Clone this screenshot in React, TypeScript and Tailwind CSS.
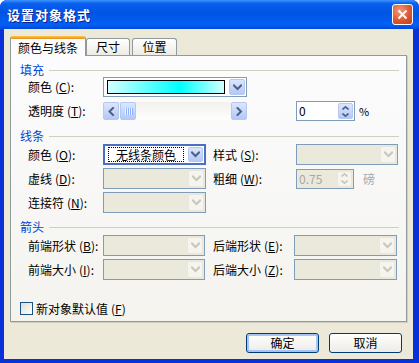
import type { ReactNode } from "react";

const font = { fontFamily: '"Noto Sans CJK SC", "Liberation Sans", sans-serif' };

function Chevron({ dir, color }: { dir: "down" | "left" | "right"; color: string }) {
  const d = dir === "down" ? "M1 1.5 L4.5 5 L8 1.5" : dir === "left" ? "M5 1 L1.5 4.5 L5 8" : "M1.5 1 L5 4.5 L1.5 8";
  const size = dir === "down" ? { w: 9, h: 7 } : { w: 7, h: 9 };
  return (
    <svg width={size.w} height={size.h} viewBox={`0 0 ${size.w} ${size.h}`}>
      <path d={d} fill="none" stroke={color} strokeWidth={2} strokeLinecap="square" />
    </svg>
  );
}

function XpButton({ disabled, children, className = "" }: { disabled?: boolean; children: ReactNode; className?: string }) {
  return (
    <div
      className={`flex items-center justify-center rounded-[2px] border ${
        disabled
          ? "border-[#e8e6dd] bg-[#f5f4ef]"
          : "border-[#b5c8f2] bg-gradient-to-b from-[#dbe6fe] to-[#b4c8f6]"
      } ${className}`}
    >
      {children}
    </div>
  );
}

function Combo({ w, disabled, focused, children }: { w: number; disabled?: boolean; focused?: boolean; children?: ReactNode }) {
  return (
    <div
      style={{ width: w }}
      className={`flex h-[21px] items-stretch ${
        focused ? "border-2 border-[#4a6fc4]" : "border border-[#7f9db9]"
      } ${disabled ? "bg-[#ebe9db]" : "bg-white"}`}
    >
      <div className="flex min-w-0 flex-1 items-center">{children}</div>
      <XpButton disabled={disabled} className={`m-px ${focused ? "w-[15px]" : "w-[16px]"}`}>
        <Chevron dir="down" color={disabled ? "#c9c7ba" : "#4d6185"} />
      </XpButton>
    </div>
  );
}

function Spin({ w, value, disabled }: { w: number; value: string; disabled?: boolean }) {
  return (
    <div style={{ width: w }} className={`flex h-[20px] items-stretch border border-[#7f9db9] ${disabled ? "bg-[#ebe9db]" : "bg-white"}`}>
      <div className={`flex flex-1 items-center pl-[2px] text-[12px] ${disabled ? "text-[#a7a6aa]" : "text-black"}`}>{value}</div>
      <XpButton disabled={disabled} className="m-px w-[15px] flex-col gap-[3px]">
        <svg width="7" height="4" viewBox="0 0 7 4">
          <path d="M0.5 3.5 L3.5 0.8 L6.5 3.5" fill="none" stroke={disabled ? "#c9c7ba" : "#4d6185"} strokeWidth={1.6} />
        </svg>
        <svg width="7" height="4" viewBox="0 0 7 4">
          <path d="M0.5 0.5 L3.5 3.2 L6.5 0.5" fill="none" stroke={disabled ? "#c9c7ba" : "#4d6185"} strokeWidth={1.6} />
        </svg>
      </XpButton>
    </div>
  );
}

function Label({ w, text, k }: { w: number; text: string; k: string }) {
  return (
    <div style={{ width: w }} className="shrink-0 text-[12px] leading-none text-black">
      {text}
      <span className="ml-[3px]">(</span>
      <span className="underline">{k}</span>):
    </div>
  );
}

function Section({ title }: { title: string }) {
  return (
    <div className="flex h-[14px] items-center pl-[9px] pr-[7px]">
      <span className="text-[12px] leading-none text-[#0046d5]">{title}</span>
      <div className="ml-[5px] h-px flex-1 bg-[#d0d0bf]" />
    </div>
  );
}

function Tab({ label, active, w }: { label: string; active?: boolean; w: number }) {
  if (active)
    return (
      <div
        style={{ width: w }}
        className="relative z-10 -mb-px flex h-[20px] flex-col overflow-hidden rounded-t-[3px] border-x border-[#919b9c] bg-[#fcfcfe]"
      >
        <div className="h-[3px] bg-gradient-to-b from-[#ffc83c] to-[#e68b2c]" />
        <div className="flex flex-1 items-center justify-center text-[12px] leading-none">{label}</div>
      </div>
    );
  return (
    <div
      style={{ width: w }}
      className="mt-[2px] flex h-[17px] items-center justify-center rounded-t-[3px] border-x border-t border-[#919b9c] bg-gradient-to-b from-white to-[#ecebe6] text-[12px] leading-none"
    >
      {label}
    </div>
  );
}

export default function App() {
  return (
    <div style={font} className="h-[363px] w-[419px] overflow-hidden bg-white">
      <div className="flex h-full flex-col rounded-t-[7px] bg-[#0831d9]">
        <div className="flex h-[29px] shrink-0 items-center rounded-t-[7px] bg-[linear-gradient(to_bottom,#3d95ff_0%,#0a5fef_12%,#0054e3_45%,#0060f5_85%,#0048d8_100%)] pl-[7px] pr-[6px]">
          <span className="text-[13px] font-bold leading-none tracking-[1px] text-white [text-shadow:1px_1px_0_#0f1f8f]">设置对象格式</span>
          <div className="ml-auto flex h-[21px] w-[21px] items-center justify-center rounded-[3px] border border-white bg-[radial-gradient(circle_at_35%_30%,#f09a7d,#d9542d_60%,#c24120)]">
            <svg width="11" height="11" viewBox="0 0 11 11">
              <path d="M1.5 1.5 L9.5 9.5 M9.5 1.5 L1.5 9.5" stroke="white" strokeWidth={2} />
            </svg>
          </div>
        </div>
        <div className="mb-[4px] ml-[4px] mr-[6px] flex flex-1 flex-col bg-[#ece9d8] px-[6px] pt-[7px]">
          <div className="flex items-end">
            <Tab label="颜色与线条" active w={76} />
            <Tab label="尺寸" w={44} />
            <div className="w-[2px]" />
            <Tab label="位置" w={45} />
          </div>
          <div className="flex h-[267px] w-[397px] flex-col border border-[#919b9c] bg-gradient-to-b from-[#fcfcfe] to-[#f4f3ee] shadow-[1px_1px_0_#d0cec1]">
            <div className="mt-[7px]">
              <Section title="填充" />
            </div>
            <div className="flex h-[20px] items-center pl-[17px]">
              <Label w={75} text="颜色" k="C" />
              <div className="flex h-[20px] w-[144px] items-stretch border border-[#7f9db9] bg-white">
                <div className="flex flex-1 items-center pl-[3px] pr-[3px]">
                  <div className="h-[14px] flex-1 border border-black bg-[linear-gradient(to_right,#d4ffff,#00ffff_62%,#d4ffff)]" />
                </div>
                <XpButton className="m-px w-[16px]">
                  <Chevron dir="down" color="#4d6185" />
                </XpButton>
              </div>
            </div>
            <div className="mt-[4px] flex h-[20px] items-center pl-[17px]">
              <Label w={75} text="透明度" k="T" />
              <div className="flex h-[18px] w-[144px] items-stretch gap-px bg-[linear-gradient(to_bottom,#f3f1ec,#fefefe)]">
                <XpButton className="w-[16px]">
                  <Chevron dir="left" color="#4d6185" />
                </XpButton>
                <XpButton className="w-[16px] gap-px">
                  {[0, 1, 2, 3].map((i) => (
                    <div key={i} className="h-[7px] w-px bg-[#eef4fe] shadow-[1px_0_0_#8cb0f8]" />
                  ))}
                </XpButton>
                <div className="flex-1" />
                <XpButton className="w-[16px]">
                  <Chevron dir="right" color="#4d6185" />
                </XpButton>
              </div>
              <div className="ml-[49px]">
                <Spin w={59} value="0" />
              </div>
              <span className="ml-[4px] text-[11px] leading-none">%</span>
            </div>

            <div className="mt-[8px]">
              <Section title="线条" />
            </div>
            <div className="mt-px flex h-[21px] items-center pl-[17px]">
              <Label w={75} text="颜色" k="O" />
              <Combo w={103} focused>
                <div className="mx-[3px] flex h-[15px] flex-1 items-center justify-center border border-dotted border-black text-[12px] leading-none">
                  无线条颜色
                </div>
              </Combo>
              <div className="w-[7px]" />
              <Label w={83} text="样式" k="S" />
              <Combo w={102} disabled />
            </div>
            <div className="mt-[3px] flex h-[21px] items-center pl-[17px]">
              <Label w={75} text="虚线" k="D" />
              <Combo w={103} disabled />
              <div className="w-[7px]" />
              <Label w={83} text="粗细" k="W" />
              <Spin w={58} value="0.75" disabled />
              <span className="ml-[9px] text-[12px] leading-none text-[#a7a6aa]">磅</span>
            </div>
            <div className="mt-[3px] flex h-[21px] items-center pl-[17px]">
              <Label w={75} text="连接符" k="N" />
              <Combo w={103} disabled />
            </div>

            <div className="mt-[7px]">
              <Section title="箭头" />
            </div>
            <div className="mt-[1px] flex h-[21px] items-center pl-[17px]">
              <Label w={75} text="前端形状" k="B" />
              <Combo w={102} disabled />
              <div className="w-[8px]" />
              <Label w={81} text="后端形状" k="E" />
              <Combo w={103} disabled />
            </div>
            <div className="mt-[3px] flex h-[21px] items-center pl-[17px]">
              <Label w={75} text="前端大小" k="I" />
              <Combo w={102} disabled />
              <div className="w-[8px]" />
              <Label w={81} text="后端大小" k="Z" />
              <Combo w={103} disabled />
            </div>

            <div className="mt-[22px] flex items-center pl-[9px]">
              <div className="h-[13px] w-[13px] border border-[#1c5180] bg-gradient-to-br from-[#dcdcd7] to-white" />
              <span className="ml-[3px] text-[12px] leading-none">
                新对象默认值<span className="ml-[3px]">(</span>
                <span className="underline">F</span>)
              </span>
            </div>
          </div>
          <div className="mt-[11px] flex justify-end gap-[10px] pr-[5px]">
            <div className="flex h-[20px] w-[73px] items-center justify-center rounded-[3px] border border-[#003c74] bg-gradient-to-b from-white to-[#ecebe6] text-[12px] leading-none shadow-[inset_0_0_0_2px_#a6c4f5]">
              确定
            </div>
            <div className="flex h-[20px] w-[73px] items-center justify-center rounded-[3px] border border-[#003c74] bg-gradient-to-b from-white to-[#ecebe6] text-[12px] leading-none">
              取消
            </div>
          </div>
        </div>
      </div>
    </div>
  );
}
